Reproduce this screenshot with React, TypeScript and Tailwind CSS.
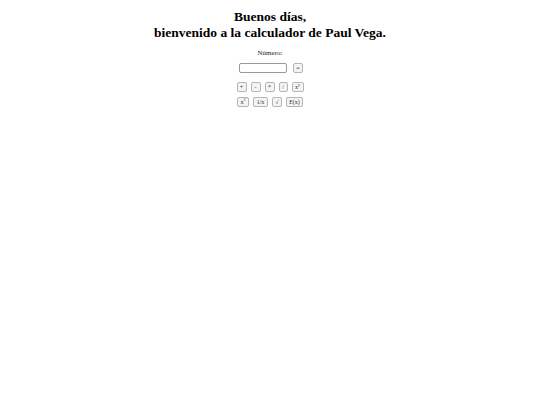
const btn =
  'h-[10px] px-0 border border-[#b5b5b5] rounded-[2px] bg-[#f4f4f4] text-[6px] leading-none text-[#333] flex items-center justify-center';

export default function App() {
  return (
    <div className="min-h-[405px] w-[540px] bg-white text-black font-['Liberation_Serif',serif]">
      <h1 className="pt-[9px] text-center text-[13.5px] font-bold leading-[16px]">
        Buenos días,
        <br />
        bienvenido a la calculador de Paul Vega.
      </h1>
      <div className="mt-[8px] flex flex-col items-center">
        <p className="text-[7px] leading-[8px] text-[#222]">Número:</p>
        <div className="mt-[6px] flex items-center gap-[6px] pl-[2px]">
          <input
            type="text"
            className="h-[10px] w-[48px] border border-[#9a9a9a] rounded-[2px] bg-white"
          />
          <button className={btn + ' w-[10px]'}>=</button>
        </div>
        <div className="mt-[9px] flex items-center gap-[4px]">
          <button className={btn + ' w-[10px]'}>+</button>
          <button className={btn + ' w-[10px]'}>-</button>
          <button className={btn + ' w-[10px]'}>*</button>
          <button className={btn + ' w-[9px]'}>/</button>
          <button className={btn + ' w-[12px]'}>
            x<span className="relative -top-[2px] text-[4px]">y</span>
          </button>
        </div>
        <div className="mt-[5px] flex items-center gap-[4px]">
          <button className={btn + ' w-[12px]'}>
            x<span className="relative -top-[2px] text-[4px]">2</span>
          </button>
          <button className={btn + ' w-[15px]'}>1/x</button>
          <button className={btn + ' w-[10px]'}>√</button>
          <button className={btn + ' w-[17px]'}>E(x)</button>
        </div>
      </div>
    </div>
  );
}
